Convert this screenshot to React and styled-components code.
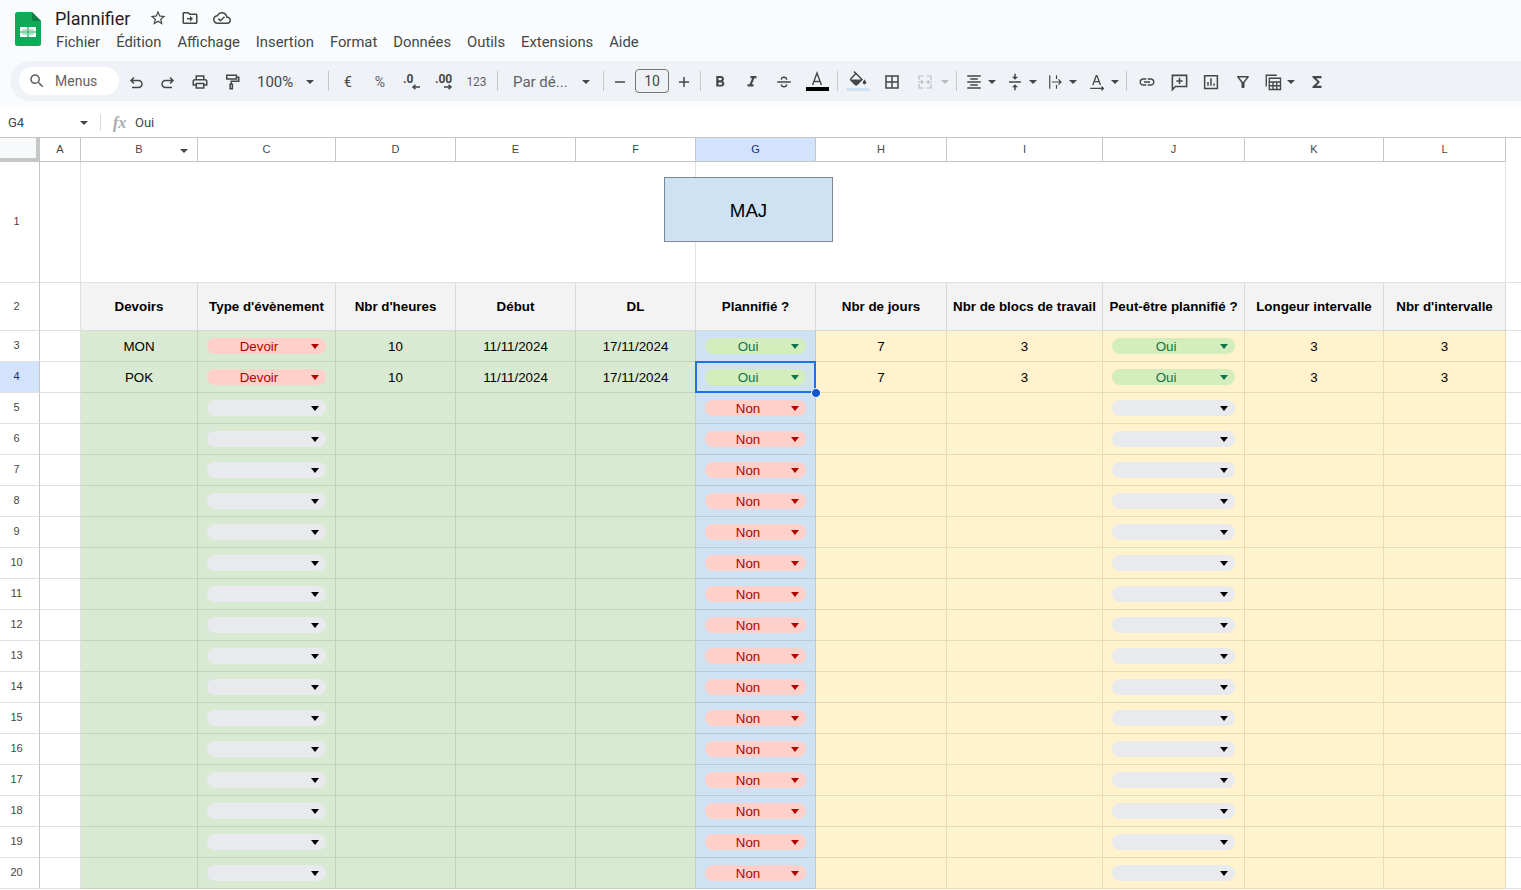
import React from 'react'
import styled, { createGlobalStyle } from 'styled-components'

const GlobalStyle = createGlobalStyle`
    html, body {
        margin: 0;
        padding: 0;
        background: #fff;
        overflow: hidden;
    }
`

const UI_FONT = `Roboto, "Liberation Sans", sans-serif`
const CELL_FONT = `"Liberation Sans", Arial, sans-serif`
const COLUMNS = '40px 41px 117px 138px 120px 120px 120px 120px 131px 156px 142px 139px 122px 15px'

const TONES = {
    white: { bg: '#fff', line: '#e1e1e1' },
    head: { bg: '#f3f3f3', line: '#d9d9d9' },
    green: { bg: '#d9ead3', line: '#c1d4bb' },
    blue: { bg: '#cfe2f3', line: '#b8cad9' },
    yellow: { bg: '#fff2cc', line: '#e6dab8' },
}

const CHIPS = {
    red: { bg: '#ffcfc9', color: '#b10202' },
    green: { bg: '#d4edbc', color: '#11734b' },
    gray: { bg: '#e8eaed', color: '#000' },
}

const Page = styled.div`
    width: 1521px;
    height: 890px;
    overflow: hidden;
    font-family: ${UI_FONT};
    color: #1f1f1f;
`
const TopArea = styled.div`
    height: 108px;
    background: #f9fbfd;
`
const TitleBar = styled.div`
    height: 61px;
    display: flex;
    box-sizing: border-box;
    padding-left: 15px;
`
const Logo = styled.svg`
    width: 26px;
    height: 34px;
    margin-top: 12px;
    flex: none;
`
const TitleColumn = styled.div`
    margin-left: 14px;
    display: flex;
    flex-direction: column;
`
const TitleRow = styled.div`
    display: flex;
    align-items: center;
    height: 24px;
    margin-top: 6px;
`
const DocName = styled.div`
    font-size: 18px;
    color: #1f1f1f;
    width: 94px;
`
const TitleIcon = styled.svg`
    width: ${(p) => p.$size || 18}px;
    height: ${(p) => p.$size || 18}px;
    margin-right: ${(p) => p.$gap || 14}px;
    fill: #444746;
`
const MenuBar = styled.div`
    display: flex;
    gap: 16px;
    margin-top: 1px;
    margin-left: 1px;
    height: 22px;
    align-items: center;
    font-size: 14.8px;
    color: #444746;
`
const Toolbar = styled.div`
    height: 40px;
    margin-left: 10px;
    padding-left: 9px;
    border-radius: 20px 0 0 20px;
    background: #eff3f8;
    display: flex;
    align-items: center;
    color: #444746;
`
const SearchBox = styled.div`
    width: 100px;
    height: 28px;
    margin-right: 1px;
    box-sizing: border-box;
    padding: 0 0 1px 9px;
    border-radius: 14px;
    background: #fff;
    display: flex;
    align-items: center;
    gap: 9px;
    font-size: 14px;
    color: #5f6368;
`
const Tool = styled.div`
    width: ${(p) => p.$w || 32}px;
    height: 28px;
    flex: none;
    box-sizing: border-box;
    padding-top: 2px;
    padding-left: ${(p) => p.$pl || 0}px;
    margin-left: ${(p) => p.$ml || 0}px;
    margin-right: ${(p) => p.$mr || 0}px;
    display: flex;
    align-items: center;
    justify-content: ${(p) => (p.$pl ? 'flex-start' : 'center')};
    font-size: ${(p) => p.$size || 14}px;
    color: ${(p) => p.$color || '#444746'};
`
const ToolIcon = styled.svg`
    width: ${(p) => p.$size || 18}px;
    height: ${(p) => p.$size || 18}px;
    flex: none;
    fill: ${(p) => p.$fill || 'currentColor'};
`
const LineIcon = styled.svg`
    width: ${(p) => p.$size || 18}px;
    height: ${(p) => p.$size || 18}px;
    flex: none;
    fill: none;
    stroke: ${(p) => p.$stroke || 'currentColor'};
    stroke-width: ${(p) => p.$weight || 2};
`
const Caret = styled.span`
    flex: none;
    width: 0;
    height: 0;
    margin-left: ${(p) => p.$gap || 5}px;
    border-left: 4px solid transparent;
    border-right: 4px solid transparent;
    border-top: 4px solid ${(p) => p.$color || '#444746'};
`
const Separator = styled.div`
    width: 1px;
    height: 20px;
    flex: none;
    background: #c7c7c7;
    margin-left: ${(p) => p.$l}px;
    margin-right: ${(p) => p.$r}px;
`
const SizeBox = styled.div`
    width: 34px;
    height: 24px;
    flex: none;
    box-sizing: border-box;
    border: 1px solid #747775;
    border-radius: 4px;
    display: flex;
    align-items: center;
    justify-content: center;
    font-size: 14px;
`
const DecimalText = styled.text`
    font-family: ${UI_FONT};
    font-size: 12px;
    font-weight: 700;
    fill: #444746;
`
const FormulaBar = styled.div`
    height: 29px;
    background: #fff;
    display: flex;
    align-items: center;
    font-size: 13px;
    color: #444746;
`
const NameBox = styled.div`
    width: 100px;
    padding: 0 12px 0 8px;
    box-sizing: border-box;
    display: flex;
    align-items: center;
    justify-content: space-between;
`
const FormulaDivider = styled.div`
    width: 1px;
    height: 17px;
    background: #d9d9d9;
    margin-right: 12px;
`
const FxLabel = styled.span`
    font-family: "Liberation Serif", serif;
    font-style: italic;
    font-weight: 700;
    font-size: 16px;
    color: #a8abad;
    width: 22px;
`
const Sheet = styled.div`
    position: relative;
    border-top: 1px solid #c4c7c5;
`
const Row = styled.div`
    display: grid;
    grid-template-columns: ${COLUMNS};
    height: ${(p) => p.$h}px;
`
const Corner = styled.div`
    box-sizing: border-box;
    background: #f8f9fa;
    border-right: 4px solid #c4c7c5;
    border-bottom: 4px solid #c4c7c5;
`
const ColumnHead = styled.div`
    box-sizing: border-box;
    display: flex;
    align-items: center;
    justify-content: center;
    padding-bottom: 2px;
    position: relative;
    background: ${(p) => (p.$active ? '#d3e3fd' : '#fff')};
    border-right: 1px solid #c4c7c5;
    border-bottom: 1px solid #c4c7c5;
    font-family: ${CELL_FONT};
    font-size: 11px;
    color: ${(p) => (p.$active ? '#12326e' : '#444746')};
`
const FilterCaret = styled.span`
    position: absolute;
    right: 9px;
    top: 11px;
    width: 0;
    height: 0;
    border-left: 4px solid transparent;
    border-right: 4px solid transparent;
    border-top: 4px solid #444746;
`
const RowHead = styled.div`
    box-sizing: border-box;
    display: flex;
    align-items: center;
    justify-content: center;
    padding: 0 6px 2px 0;
    background: ${(p) => (p.$active ? '#d3e3fd' : '#fff')};
    border-right: 1px solid #c4c7c5;
    border-bottom: 1px solid #e1e1e1;
    font-family: ${CELL_FONT};
    font-size: 11px;
    color: ${(p) => (p.$active ? '#12326e' : '#444746')};
`
const Cell = styled.div`
    box-sizing: border-box;
    position: relative;
    grid-column: span ${(p) => p.$span || 1};
    display: flex;
    align-items: center;
    justify-content: center;
    padding: 0 ${(p) => (p.$chip ? 9 : 0)}px;
    background: ${(p) => TONES[p.$tone].bg};
    border-right: 1px solid ${(p) => TONES[p.$tone].line};
    border-bottom: 1px solid ${(p) => TONES[p.$tone].line};
    font-family: ${CELL_FONT};
    font-size: 13.33px;
    font-weight: ${(p) => (p.$bold ? 700 : 400)};
    color: #000;
    white-space: nowrap;
`
const Margin = styled.div`
    border-bottom: 1px solid #e1e1e1;
`
const Chip = styled.div`
    flex: 1;
    height: 16px;
    display: flex;
    align-items: center;
    border-radius: 8px;
    background: ${(p) => CHIPS[p.$kind].bg};
    color: ${(p) => CHIPS[p.$kind].color};
`
const ChipLabel = styled.span`
    flex: 1;
    text-align: center;
`
const ChipCaret = styled.span`
    width: 0;
    height: 0;
    margin-right: 7px;
    border-left: 4px solid transparent;
    border-right: 4px solid transparent;
    border-top: 5px solid currentColor;
`
const Selection = styled.div`
    position: absolute;
    left: -1px;
    top: -1px;
    right: -1px;
    bottom: -1px;
    border: 2px solid #1a73e8;
    z-index: 2;
`
const FillHandle = styled.div`
    position: absolute;
    right: -7px;
    bottom: -7px;
    width: 8px;
    height: 8px;
    border-radius: 50%;
    background: #0b57d0;
    border: 1px solid #fff;
`
const DrawingButton = styled.div`
    position: absolute;
    left: 664px;
    top: 39px;
    width: 169px;
    height: 65px;
    box-sizing: border-box;
    padding-top: 2px;
    border: 1px solid #7d8894;
    background: #cfe2f3;
    display: flex;
    align-items: center;
    justify-content: center;
    font-family: ${CELL_FONT};
    font-size: 18.67px;
    color: #000;
    z-index: 3;
`

const PATHS = {
    search: 'M15.5 14h-.79l-.28-.27C15.41 12.59 16 11.11 16 9.5 16 5.91 13.09 3 9.5 3S3 5.91 3 9.5 5.91 16 9.5 16c1.61 0 3.09-.59 4.23-1.57l.27.28v.79l5 4.99L20.49 19l-4.99-5zm-6 0C7.01 14 5 11.99 5 9.5S7.01 5 9.5 5 14 7.01 14 9.5 11.99 14 9.5 14z',
    star: 'M22 9.24l-7.19-.62L12 2 9.19 8.63 2 9.24l5.46 4.73L5.82 21 12 17.27 18.18 21l-1.63-7.03L22 9.24zM12 15.4l-3.76 2.27 1-4.28-3.32-2.88 4.38-.38L12 6.1l1.71 4.04 4.38.38-3.32 2.88 1 4.28L12 15.4z',
    move: 'M20 6h-8l-2-2H4c-1.1 0-2 .9-2 2v12c0 1.1.9 2 2 2h16c1.1 0 2-.9 2-2V8c0-1.1-.9-2-2-2zm0 12H4V6h5.17l2 2H20v10zm-8-4H8v-2h4V9l4 4-4 4v-3z',
    cloud: 'M19.35 10.04C18.67 6.59 15.64 4 12 4 9.11 4 6.6 5.64 5.35 8.04 2.34 8.36 0 10.91 0 14c0 3.31 2.69 6 6 6h13c2.76 0 5-2.24 5-5 0-2.64-2.05-4.78-4.65-4.96zM19 18H6c-2.21 0-4-1.79-4-4 0-2.05 1.53-3.76 3.56-3.97l1.07-.11.5-.95C8.08 7.14 9.94 6 12 6c2.62 0 4.88 1.86 5.39 4.43l.3 1.5 1.53.11c1.56.1 2.78 1.41 2.78 2.96 0 1.65-1.35 3-3 3zm-9-3.82l-2.09-2.09L6.5 13.5 10 17l6.01-6.01-1.41-1.41z',
    print: 'M19 8h-1V3H6v5H5c-1.66 0-3 1.34-3 3v6h4v4h12v-4h4v-6c0-1.66-1.34-3-3-3zM8 5h8v3H8V5zm8 14H8v-4h8v4zm4-4h-2v-2H6v2H4v-4c0-.55.45-1 1-1h14c.55 0 1 .45 1 1v4z',
    bold: 'M15.6 10.79c.97-.67 1.65-1.77 1.65-2.79 0-2.26-1.75-4-4-4H7v14h7.04c2.09 0 3.71-1.7 3.71-3.79 0-1.52-.86-2.82-2.15-3.42zM10 6.5h3c.83 0 1.5.67 1.5 1.5s-.67 1.5-1.5 1.5h-3v-3zm3.5 9H10v-3h3.5c.83 0 1.5.67 1.5 1.5s-.67 1.5-1.5 1.5z',
    italic: 'M10 4v3h2.21l-3.42 8H6v3h8v-3h-2.21l3.42-8H18V4z',
    borders: 'M3 3v18h18V3H3zm8 16H5v-6h6v6zm0-8H5V5h6v6zm8 8h-6v-6h6v6zm0-8h-6V5h6v6z',
    align: 'M7 15v2h10v-2H7zm-4 6h18v-2H3v2zm0-8h18v-2H3v2zm4-6v2h10V7H7zM3 3v2h18V3H3z',
    valign: 'M8 19h3v4h2v-4h3l-4-4-4 4zm8-14h-3V1h-2v4H8l4 4 4-4zM4 11v2h16v-2H4z',
    link: 'M3.9 12c0-1.71 1.39-3.1 3.1-3.1h4V7H7c-2.76 0-5 2.24-5 5s2.24 5 5 5h4v-1.9H7c-1.71 0-3.1-1.39-3.1-3.1zM8 13h8v-2H8v2zm9-6h-4v1.9h4c1.71 0 3.1 1.39 3.1 3.1s-1.39 3.1-3.1 3.1h-4V17h4c2.76 0 5-2.24 5-5s-2.24-5-5-5z',
    filter: 'M7 6h10l-5.01 6.3L7 6zM4.25 5.61C6.27 8.2 10 13 10 13v6c0 .55.45 1 1 1h2c.55 0 1-.45 1-1v-6s3.72-4.8 5.74-7.39A.998.998 0 0 0 18.95 4H5.04c-.83 0-1.3.95-.79 1.61z',
    sigma: 'M18 4H6v2l6.5 6L6 18v2h12v-3h-7l5-5-5-5h7V4z',
}

const Glyph = ({ name, size }) => (
    <ToolIcon viewBox="0 0 24 24" $size={size}>
        <path d={PATHS[name]} />
    </ToolIcon>
)

const SheetsLogo = () => (
    <Logo viewBox="0 0 26 34">
        <path d="M2.5 0H17l9 9v22.5a2.5 2.5 0 0 1-2.5 2.5h-21A2.5 2.5 0 0 1 0 31.5v-29A2.5 2.5 0 0 1 2.5 0z" fill="#0fa958" />
        <path d="M17 0l9 9h-6.5A2.5 2.5 0 0 1 17 6.5z" fill="#0b8043" />
        <path d="M5 15h16v10H5z" fill="#fff" />
        <path d="M7 17h5v2.2H7zM14 17h5v2.2h-5zM7 20.8h5V23H7zM14 20.8h5V23h-5z" fill="#b7e4c7" />
        <path d="M12.4 15h1.2v10h-1.2zM5 19.4h16v1.2H5z" fill="#0fa958" />
    </Logo>
)

const Main = () => (
    <TopArea>
        <TitleBar>
            <SheetsLogo />
            <TitleColumn>
                <TitleRow>
                    <DocName>Plannifier</DocName>
                    <TitleIcon viewBox="0 0 24 24" $gap={14}><path d={PATHS.star} /></TitleIcon>
                    <TitleIcon viewBox="0 0 24 24" $gap={14}><path d={PATHS.move} /></TitleIcon>
                    <TitleIcon viewBox="0 0 24 24"><path d={PATHS.cloud} /></TitleIcon>
                </TitleRow>
                <MenuBar>
                    {['Fichier', 'Édition', 'Affichage', 'Insertion', 'Format', 'Données', 'Outils', 'Extensions', 'Aide'].map((m) => (
                        <span key={m}>{m}</span>
                    ))}
                </MenuBar>
            </TitleColumn>
        </TitleBar>
        <Toolbar>
            <SearchBox>
                <Glyph name="search" />
                Menus
            </SearchBox>
            <Tool>
                <LineIcon viewBox="0 0 18 18" $weight={1.5}>
                    <path d="M4 7.5h7.5a3.5 3.5 0 0 1 0 7H5M7 4.5L4 7.5l3 3" />
                </LineIcon>
            </Tool>
            <Tool>
                <LineIcon viewBox="0 0 18 18" $weight={1.5}>
                    <path d="M14 7.5H6.5a3.5 3.5 0 0 0 0 7H13M11 4.5l3 3-3 3" />
                </LineIcon>
            </Tool>
            <Tool><Glyph name="print" /></Tool>
            <Tool>
                <LineIcon viewBox="0 0 24 24">
                    <path d="M5 3h13v5H5zM18 5.5h3V11H11v4M9.5 15h3v6h-3z" />
                </LineIcon>
            </Tool>
            <Tool $w={72} $pl={9} $size={15}>
                100%
                <Caret $gap={13} />
            </Tool>
            <Separator $l={8} $r={3} />
            <Tool>€</Tool>
            <Tool $color="#5f6368">%</Tool>
            <Tool>
                <ToolIcon viewBox="0 0 24 24" $size={24}>
                    <DecimalText x="3" y="13">.0</DecimalText>
                    <path d="M20 17h-7M15.5 14.8L13 17l2.5 2.2" fill="none" stroke="#444746" strokeWidth="1.5" />
                </ToolIcon>
            </Tool>
            <Tool>
                <ToolIcon viewBox="0 0 24 24" $size={24}>
                    <DecimalText x="3" y="13">.00</DecimalText>
                    <path d="M12 17h7M16.5 14.8L19 17l-2.5 2.2" fill="none" stroke="#444746" strokeWidth="1.5" />
                </ToolIcon>
            </Tool>
            <Tool $w={33} $size={12} $color="#5f6368">123</Tool>
            <Separator $l={4} $r={0} />
            <Tool $w={97} $pl={15} $size={15} $color="#5f6368">
                Par dé...
                <Caret $gap={14} $color="#444746" />
            </Tool>
            <Separator $l={8} $r={2} />
            <Tool $w={28} $mr={1}>
                <LineIcon viewBox="0 0 18 18" $weight={1.5}><path d="M4 9h10" /></LineIcon>
            </Tool>
            <SizeBox>10</SizeBox>
            <Tool $w={28} $ml={1}>
                <LineIcon viewBox="0 0 18 18" $weight={1.5}><path d="M4 9h10M9 4v10" /></LineIcon>
            </Tool>
            <Separator $l={2} $r={3} />
            <Tool><Glyph name="bold" /></Tool>
            <Tool><Glyph name="italic" /></Tool>
            <Tool>
                <LineIcon viewBox="0 0 24 24" $weight={1.8}>
                    <path d="M3 12h18M8.5 9c0-4.5 7-4.5 7 0M8.5 15c0 4.5 7 4.5 7 0" />
                </LineIcon>
            </Tool>
            <Tool $ml={1}>
                <ToolIcon viewBox="0 0 24 24" $size={24} style={{ marginTop: -2 }}>
                    <path d="M7.6 16L12 4l4.4 12M9 12.5h6" fill="none" stroke="#444746" strokeWidth="1.4" />
                    <rect x="1" y="18" width="23" height="4" fill="#000" />
                </ToolIcon>
            </Tool>
            <Separator $l={4} $r={4} />
            <Tool>
                <ToolIcon viewBox="0 0 24 24" $size={24} style={{ marginTop: -2 }}>
                    <path d="M8 2.5l8 8-5 5a1.3 1.3 0 0 1-1.8 0l-4.2-4.2a1.3 1.3 0 0 1 0-1.8L10.5 4" fill="none" stroke="#444746" strokeWidth="1.5" />
                    <path d="M5 10.5h11l-5 5a1.3 1.3 0 0 1-1.8 0z" fill="#444746" />
                    <path d="M18.5 10.5s-1.8 2-1.8 3.1a1.8 1.8 0 0 0 3.6 0c0-1.1-1.8-3.1-1.8-3.1z" fill="#444746" />
                    <rect x="0.5" y="19" width="23" height="3" fill="#cfe2f3" />
                </ToolIcon>
            </Tool>
            <Tool $ml={2}><Glyph name="borders" /></Tool>
            <Tool $w={45} $pl={8} $color="#b9bbbd">
                <LineIcon viewBox="0 0 24 24" $weight={1.6}>
                    <path d="M10 4H4v5M4 15v5h6M14 4h6v5M20 15v5h-6M3 12h6M7 9.8L9.2 12 7 14.2M21 12h-6M17 9.8L14.8 12l2.2 2.2" />
                </LineIcon>
                <Caret $gap={7} $color="#b9bbbd" />
            </Tool>
            <Separator $l={3} $r={3} />
            <Tool $w={40} $pl={5}><Glyph name="align" /><Caret /></Tool>
            <Tool $w={40} $pl={6}><Glyph name="valign" /><Caret /></Tool>
            <Tool $w={42} $pl={6}>
                <LineIcon viewBox="0 0 24 24" $weight={1.6}>
                    <path d="M5 3v18M14 3v5M14 16v5M8 12h12M16.5 8.5L20 12l-3.5 3.5" />
                </LineIcon>
                <Caret />
            </Tool>
            <Tool $w={40} $pl={6}>
                <LineIcon viewBox="0 0 24 24" $weight={1.8}>
                    <path d="M6.5 16L11 3.5h1L16.5 16M8 11.5h7.5M3 20.5h17M18 18l2.5 2.5L18 23" />
                </LineIcon>
                <Caret />
            </Tool>
            <Separator $l={4} $r={4} />
            <Tool><Glyph name="link" /></Tool>
            <Tool>
                <LineIcon viewBox="0 0 24 24" $size={19}>
                    <path d="M3 3h18v14H7l-4 4zM12 6v8M8 10h8" />
                </LineIcon>
            </Tool>
            <Tool>
                <LineIcon viewBox="0 0 24 24">
                    <path d="M3.5 3.5h17v17h-17zM8 17v-5M12 17V7M16 17v-3" />
                </LineIcon>
            </Tool>
            <Tool><Glyph name="filter" /></Tool>
            <Tool $w={42} $pl={5}>
                <LineIcon viewBox="0 0 24 24" $weight={1.8}>
                    <path d="M3 18V3h14M7 7h15v15H7zM7 12h15M7 17h15M12 12v10M17 12v10" />
                </LineIcon>
                <Caret />
            </Tool>
            <Tool><Glyph name="sigma" /></Tool>
        </Toolbar>
    </TopArea>
)

const Formula = () => (
    <FormulaBar>
        <NameBox>
            G4
            <Caret />
        </NameBox>
        <FormulaDivider />
        <FxLabel>fx</FxLabel>
        Oui
    </FormulaBar>
)

const LETTERS = ['A', 'B', 'C', 'D', 'E', 'F', 'G', 'H', 'I', 'J', 'K', 'L']
const HEADINGS = ['Devoirs', "Type d'évènement", "Nbr d'heures", 'Début', 'DL', 'Plannifié ?', 'Nbr de jours', 'Nbr de blocs de travail', 'Peut-être plannifié ?', 'Longeur intervalle', "Nbr d'intervalle"]
const FILLED = {
    3: { name: 'MON', type: 'Devoir', hours: '10', start: '11/11/2024', end: '17/11/2024', days: '7', blocks: '3', maybe: 'Oui', gap: '3', count: '3' },
    4: { name: 'POK', type: 'Devoir', hours: '10', start: '11/11/2024', end: '17/11/2024', days: '7', blocks: '3', maybe: 'Oui', gap: '3', count: '3' },
}

const Dropdown = ({ tone, value, kind, children }) => (
    <Cell $tone={tone} $chip>
        <Chip $kind={kind}>
            <ChipLabel>{value}</ChipLabel>
            <ChipCaret />
        </Chip>
        {children}
    </Cell>
)

const DataRow = ({ n }) => {
    const data = FILLED[n] || {}
    const planned = data.name ? 'Oui' : 'Non'
    return (
        <Row $h={31}>
            <RowHead $active={n === 4}>{n}</RowHead>
            <Cell $tone="white" />
            <Cell $tone="green">{data.name}</Cell>
            <Dropdown tone="green" value={data.type} kind={data.type ? 'red' : 'gray'} />
            <Cell $tone="green">{data.hours}</Cell>
            <Cell $tone="green">{data.start}</Cell>
            <Cell $tone="green">{data.end}</Cell>
            <Dropdown tone="blue" value={planned} kind={data.name ? 'green' : 'red'}>
                {n === 4 && (
                    <Selection>
                        <FillHandle />
                    </Selection>
                )}
            </Dropdown>
            <Cell $tone="yellow">{data.days}</Cell>
            <Cell $tone="yellow">{data.blocks}</Cell>
            <Dropdown tone="yellow" value={data.maybe} kind={data.maybe ? 'green' : 'gray'} />
            <Cell $tone="yellow">{data.gap}</Cell>
            <Cell $tone="yellow">{data.count}</Cell>
            <Margin />
        </Row>
    )
}

const Grid = () => {
    const rows = []
    for (let n = 3; n <= 20; n++) rows.push(<DataRow key={n} n={n} />)
    return (
        <Sheet>
            <Row $h={24}>
                <Corner />
                {LETTERS.map((l) => (
                    <ColumnHead key={l} $active={l === 'G'}>
                        {l}
                        {l === 'B' && <FilterCaret />}
                    </ColumnHead>
                ))}
            </Row>
            <Row $h={121}>
                <RowHead>1</RowHead>
                <Cell $tone="white" />
                <Cell $tone="white" $span={5} />
                <Cell $tone="white" $span={6} />
                <Margin />
            </Row>
            <Row $h={48}>
                <RowHead>2</RowHead>
                <Cell $tone="white" />
                {HEADINGS.map((h) => (
                    <Cell key={h} $tone="head" $bold>{h}</Cell>
                ))}
                <Margin />
            </Row>
            {rows}
            <DrawingButton>MAJ</DrawingButton>
        </Sheet>
    )
}

const App = () => (
    <Page>
        <GlobalStyle />
        <Main />
        <Formula />
        <Grid />
    </Page>
)

export default App
